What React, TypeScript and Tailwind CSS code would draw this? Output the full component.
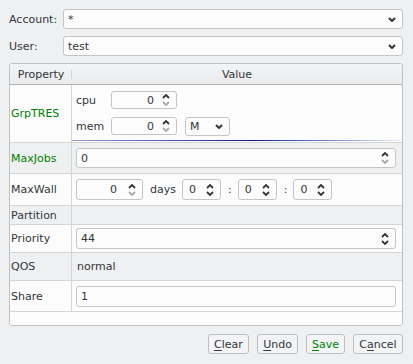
import React from "react";

const TEXT = "text-[#31363b]";

function Chevron({ up = false, dim = false }: { up?: boolean; dim?: boolean }) {
  return (
    <svg width="8" height="5" viewBox="0 0 8 5" className="block">
      <path
        d={up ? "M1 4 L4 1 L7 4" : "M1 1 L4 4 L7 1"}
        fill="none"
        stroke={dim ? "#a6a8aa" : "#31363b"}
        strokeWidth="1.8"
      />
    </svg>
  );
}

function SpinArrows({ downDim = false }: { downDim?: boolean }) {
  return (
    <div className="flex flex-col gap-[2px]">
      <Chevron up />
      <Chevron dim={downDim} />
    </div>
  );
}

function Spin({
  value,
  w,
  h = "h-[18px]",
  gap = "pr-[8px]",
  downDim = false,
}: {
  value: string;
  w: string;
  h?: string;
  gap?: string;
  downDim?: boolean;
}) {
  return (
    <div
      className={`${w} ${h} flex items-center rounded-[3px] border border-[#c3c5c7] bg-[#fcfcfc] pl-[4px] pr-[6px]`}
    >
      <span className={`flex-1 text-right ${gap} ${TEXT}`}>{value}</span>
      <SpinArrows downDim={downDim} />
    </div>
  );
}

function Combo({ value, w = "w-full", h = "h-[20px]" }: { value: string; w?: string; h?: string }) {
  return (
    <div
      className={`${w} ${h} flex items-center rounded-[3px] border border-[#c3c5c7] bg-[#fcfcfc] pl-[4px] pr-[6px]`}
    >
      <span className={`flex-1 ${TEXT}`}>{value}</span>
      <svg width="8" height="5" viewBox="0 0 8 5" className="block">
        <path d="M1 1 L4 4 L7 1" fill="none" stroke="#31363b" strokeWidth="2" />
      </svg>
    </div>
  );
}

function LineEdit({ value }: { value: string }) {
  return (
    <div className="w-[320px] h-[21px] flex items-center rounded-[3px] border border-[#c3c5c7] bg-[#fcfcfc] pl-[4px]">
      <span className={TEXT}>{value}</span>
    </div>
  );
}

function Row({
  label,
  green = false,
  alt = false,
  h,
  children,
}: {
  label: string;
  green?: boolean;
  alt?: boolean;
  h: string;
  children?: React.ReactNode;
}) {
  return (
    <div
      className={`grid grid-cols-[62px_1fr] ${h} border-b border-[#d3d5d7] ${alt ? "bg-[#eff0f1]" : "bg-[#fcfcfc]"}`}
    >
      <div
        className={`flex items-center pl-[1px] border-r border-[#d3d5d7] ${green ? "text-[#008000]" : TEXT}`}
      >
        {label}
      </div>
      <div className="flex items-center pl-[4px]">{children}</div>
    </div>
  );
}

function Btn({ w, children, green = false }: { w: string; children: React.ReactNode; green?: boolean }) {
  return (
    <div
      className={`${w} h-[20px] flex items-center justify-center rounded-[3px] border border-[#bcbebf] bg-[#f3f4f5] ${green ? "text-[#008000]" : TEXT}`}
    >
      {children}
    </div>
  );
}

export default function App() {
  return (
    <div
      className="w-[413px] h-[364px] bg-[#eff0f1] text-[11px] leading-none overflow-hidden"
      style={{ fontFamily: "'DejaVu Sans', sans-serif" }}
    >
      {/* Account / User */}
      <div className="grid grid-cols-[54px_1fr] gap-y-[7px] pl-[9px] pr-[10px] pt-[9px] items-center">
        <span className={TEXT}>Account:</span>
        <Combo value="*" />
        <span className={TEXT}>User:</span>
        <Combo value="test" />
      </div>

      {/* Property table */}
      <div className="mx-[9px] mr-[10px] mt-[7px] h-[263px] rounded-[3px] border border-[#bfc1c3] bg-[#fcfcfc] overflow-hidden flex flex-col">
        <div className="grid grid-cols-[62px_1fr] h-[21px] shrink-0 bg-linear-to-b from-[#f4f5f6] to-[#eaebec] border-b border-[#aeb0b2]">
          <div className="relative flex items-center justify-center text-[#31363b]">
            Property
            <div className="absolute right-0 top-[6px] h-[9px] w-px bg-[#d0d2d4]" />
          </div>
          <div className="flex items-center justify-center text-[#31363b]">Value</div>
        </div>

        <Row label="GrpTRES" green h="h-[58px]">
          <div className="flex flex-col w-full h-full pt-[6px]">
            <div className="flex items-center h-[18px]">
              <span className={`w-[35px] ${TEXT}`}>cpu</span>
              <Spin value="0" w="w-[66px]" downDim />
            </div>
            <div className="flex items-center h-[18px] mt-[8px]">
              <span className={`w-[35px] ${TEXT}`}>mem</span>
              <Spin value="0" w="w-[66px]" downDim />
              <div className="ml-[8px]">
                <Combo value="M" w="w-[45px]" h="h-[19px]" />
              </div>
            </div>
            <div className="mt-[5px] -ml-[4px] h-px w-[328px] bg-linear-to-r from-[#9a9ad8] via-[#101090] via-55% to-[#ececf8]" />
          </div>
        </Row>

        <Row label="MaxJobs" green alt h="h-[31px]">
          <div className="w-[320px] h-[20px] flex items-center rounded-[3px] border border-[#c3c5c7] bg-[#fcfcfc] pl-[4px] pr-[6px]">
            <span className={`flex-1 ${TEXT}`}>0</span>
            <SpinArrows downDim />
          </div>
        </Row>

        <Row label="MaxWall" h="h-[32px]">
          <Spin value="0" w="w-[67px]" h="h-[21px]" gap="pr-[11px]" downDim />
          <span className={`ml-[7px] mr-[6px] ${TEXT}`}>days</span>
          <Spin value="0" w="w-[39px]" h="h-[21px]" gap="pr-[10px]" />
          <span className={`ml-[7px] mr-[6px] ${TEXT}`}>:</span>
          <Spin value="0" w="w-[39px]" h="h-[21px]" gap="pr-[10px]" />
          <span className={`ml-[7px] mr-[6px] ${TEXT}`}>:</span>
          <Spin value="0" w="w-[39px]" h="h-[21px]" gap="pr-[10px]" />
        </Row>

        <Row label="Partition" alt h="h-[19px]" />

        <Row label="Priority" h="h-[28px]">
          <div className="w-[320px] h-[21px] flex items-center rounded-[3px] border border-[#c3c5c7] bg-[#fcfcfc] pl-[4px] pr-[6px]">
            <span className={`flex-1 ${TEXT}`}>44</span>
            <SpinArrows />
          </div>
        </Row>

        <Row label="QOS" alt h="h-[28px]">
          <span className={`pl-[1px] ${TEXT}`}>normal</span>
        </Row>

        <Row label="Share" h="h-[31px]">
          <LineEdit value="1" />
        </Row>

        <div className="flex-1 bg-[#fcfcfc]" />
      </div>

      {/* Buttons */}
      <div className="flex justify-end gap-[8px] pr-[10px] mt-[8px]">
        <Btn w="w-[41px]">
          <span className="underline underline-offset-2">C</span>lear
        </Btn>
        <Btn w="w-[41px]">
          <span className="underline underline-offset-2">U</span>ndo
        </Btn>
        <Btn w="w-[39px]" green>
          <span className="underline underline-offset-2">S</span>ave
        </Btn>
        <Btn w="w-[50px]">
          C<span className="underline underline-offset-2">a</span>ncel
        </Btn>
      </div>
    </div>
  );
}
